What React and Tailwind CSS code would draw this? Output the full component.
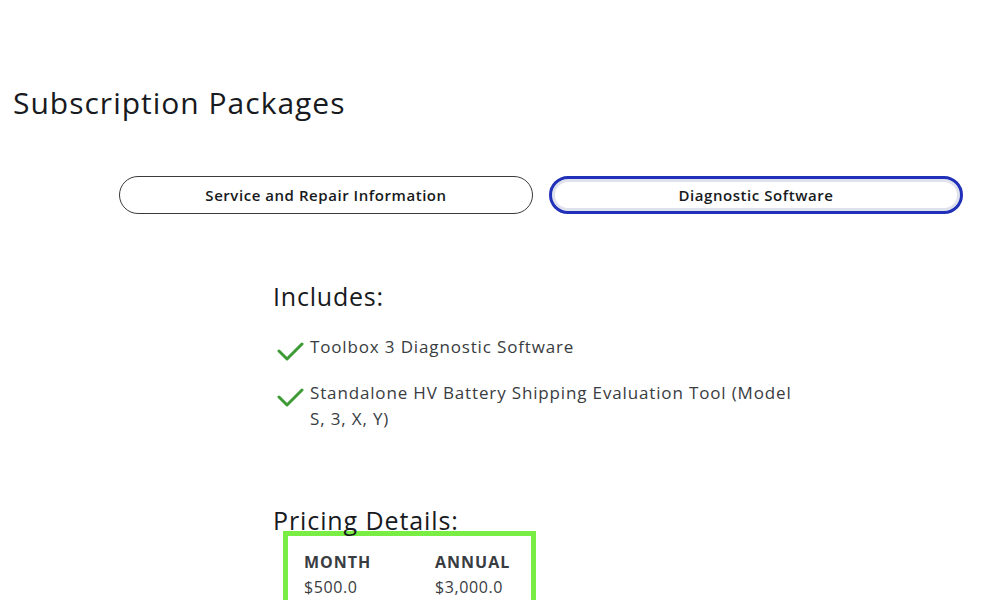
import React, { useState } from 'react';

const Check = () => (
  <svg width="28" height="22" viewBox="0 0 28 22" className="shrink-0 mt-[6px]">
    <path d="M3 11 L11 19 L26 4" fill="none" stroke="#3d9b36" strokeWidth="3" strokeLinecap="round" strokeLinejoin="round" />
  </svg>
);

const includes = [
  'Toolbox 3 Diagnostic Software',
  'Standalone HV Battery Shipping Evaluation Tool (Model S, 3, X, Y)',
];

const tabBase = 'w-[414px] h-[38px] rounded-full text-[15px] font-semibold tracking-[0.55px]';

const App = () => {
  const [tab, setTab] = useState('diag');

  return (
    <div className="w-[1000px] h-[600px] overflow-hidden bg-white text-[#171a20]" style={{ fontFamily: '"Open Sans", sans-serif' }}>
      <h1 className="pl-[13px] pt-[81px] text-[30px] leading-[44px] font-medium tracking-[1px]">
        Subscription Packages
      </h1>

      <div className="flex gap-4 pl-[119px] mt-[51px]">
        <button
          onClick={() => setTab('repair')}
          className={
            tab === 'repair'
              ? tabBase + ' border-[3px] border-[#2130b8] shadow-[inset_0_0_0_3px_#dfe2ec]'
              : tabBase + ' border border-[#3a3a3a]'
          }
        >
          Service and Repair Information
        </button>
        <button
          onClick={() => setTab('diag')}
          className={
            tab === 'diag'
              ? tabBase + ' border-[3px] border-[#2130b8] shadow-[inset_0_0_0_3px_#dfe2ec]'
              : tabBase + ' border border-[#3a3a3a]'
          }
        >
          Diagnostic Software
        </button>
      </div>

      <div className="pl-[273px] mt-[66px]">
        <h2 className="text-[25px] leading-[32px] font-medium tracking-[0.8px]">Includes:</h2>
        <ul className="mt-[22px] flex flex-col gap-[18px] w-[520px]">
          {includes.map((item) => (
            <li key={item} className="flex gap-[6px] pl-[3px]">
              <Check />
              <span className="text-[17px] leading-[26px] text-[#393c41] tracking-[0.85px]">{item}</span>
            </li>
          ))}
        </ul>

        <h2 className="mt-[72px] text-[25px] leading-[32px] font-medium tracking-[0.9px]">Pricing Details:</h2>
        <div className="-mt-[5px] ml-[10px] w-[253px] border-[5px] border-[#7aed45] bg-white px-[16px] pt-[15px] pb-4">
          <div className="flex">
            <div className="w-[131px]">
              <div className="text-[16px] leading-[22px] font-bold text-[#393c41] tracking-[1px]">MONTH</div>
              <div className="text-[16px] leading-[28px] text-[#393c41] tracking-[0.6px]">$500.0</div>
            </div>
            <div>
              <div className="text-[16px] leading-[22px] font-bold text-[#393c41] tracking-[1px]">ANNUAL</div>
              <div className="text-[16px] leading-[28px] text-[#393c41] tracking-[0.6px]">$3,000.0</div>
            </div>
          </div>
        </div>
      </div>
    </div>
  );
};

export default App;
